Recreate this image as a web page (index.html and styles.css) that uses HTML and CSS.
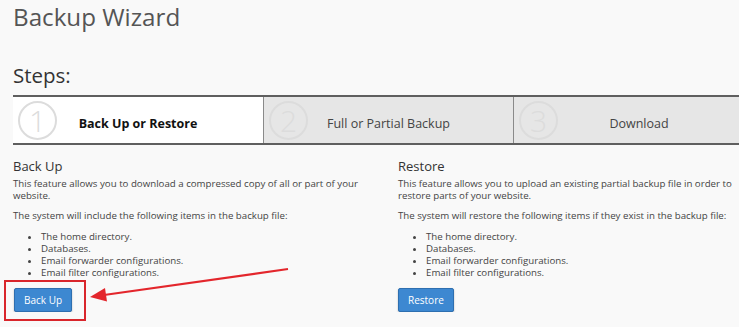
FILE: index.html
```html
<!DOCTYPE html>
<html lang="en">
<head>
    <meta charset="UTF-8">
    <meta name="viewport" content="width=device-width, initial-scale=1.0">
    <title>Backup Wizard</title>
    <link rel="stylesheet" href="styles.css">
</head>
<body>
    <div class="page">
        <h1 class="title">Backup Wizard</h1>
        <h2 class="steps-title">Steps:</h2>
        <div class="steps">
            <div class="step active">
                <span class="step-num">1</span>
                <span class="step-label">Back Up or Restore</span>
            </div>
            <div class="step">
                <span class="step-num">2</span>
                <span class="step-label">Full or Partial Backup</span>
            </div>
            <div class="step">
                <span class="step-num">3</span>
                <span class="step-label">Download</span>
            </div>
        </div>

        <div class="columns">
            <div class="col">
                <h3>Back Up</h3>
                <p>This feature allows you to download a compressed copy of all or part of your website.</p>
                <p>The system will include the following items in the backup file:</p>
                <ul>
                    <li>The home directory.</li>
                    <li>Databases.</li>
                    <li>Email forwarder configurations.</li>
                    <li>Email filter configurations.</li>
                </ul>
                <button class="btn">Back Up</button>
            </div>
            <div class="col">
                <h3>Restore</h3>
                <p>This feature allows you to upload an existing partial backup file in order to restore parts of your website.</p>
                <p>The system will restore the following items if they exist in the backup file:</p>
                <ul>
                    <li>The home directory.</li>
                    <li>Databases.</li>
                    <li>Email forwarder configurations.</li>
                    <li>Email filter configurations.</li>
                </ul>
                <button class="btn">Restore</button>
            </div>
        </div>
    </div>

    <!-- annotation drawn over the screenshot -->
    <svg class="annotation" width="739" height="327" viewBox="0 0 739 327">
        <rect x="5" y="281" width="80" height="39" fill="none" stroke="#d9262c" stroke-width="2"/>
        <line x1="288" y1="269" x2="104" y2="295" stroke="#e3262c" stroke-width="2.2"/>
        <polygon points="90,297 107,301.5 105,288" fill="#e3262c"/>
    </svg>
</body>
</html>
```

FILE: styles.css
```css
body {
    margin: 0;
    background-color: #f9f9f9;
    font-family: "Open Sans", "DejaVu Sans", sans-serif;
    color: #333;
    overflow: hidden;
}
.page {
    position: relative;
    width: 751px;
    padding-left: 13px;
}
.title {
    margin: 1px 0 0;
    font-size: 24.2px;
    line-height: 32px;
    font-weight: 400;
    color: #555;
}
.steps-title {
    margin: 28px 0 6px;
    font-size: 20.5px;
    line-height: 28px;
    font-weight: 400;
    color: #333;
}
.steps {
    display: grid;
    grid-template-columns: 250px 250px 251px;
    border-top: 2px solid #5f5f5f;
    border-bottom: 2px solid #5f5f5f;
}
.step {
    display: grid;
    grid-template-columns: 1fr auto 1fr;
    align-items: center;
    height: 46px;
    background-color: #e6e6e6;
    border-left: 1px solid #8a8a8a;
    font-size: 12.5px;
    color: #444;
}
.step.active {
    background-color: #fff;
    border-left: none;
    color: #111;
    font-weight: 700;
}
.step-num {
    grid-column: 1;
    grid-row: 1;
    justify-self: start;
    width: 35px;
    height: 35px;
    margin-left: 5px;
    border: 2px solid #dcdcdc;
    border-radius: 50%;
    font-size: 30px;
    font-weight: 300;
    line-height: 35px;
    text-align: center;
    color: #dcdcdc;
}
.step-label {
    grid-column: 2;
    grid-row: 1;
    padding-top: 6px;
}
.columns {
    display: grid;
    grid-template-columns: 385px 353px;
    margin-top: 12px;
}
.col h3 {
    margin: 0 0 3px;
    font-size: 13px;
    line-height: 18px;
    font-weight: 400;
    color: #333;
}
.col p {
    margin: 0 0 8px;
    font-size: 9.7px;
    line-height: 12px;
    color: #444;
}
.col:first-child p {
    padding-right: 20px;
}
.col ul {
    margin: 9px 0 9px;
    padding-left: 28px;
    font-size: 9.7px;
    line-height: 12px;
    color: #444;
}
.btn {
    display: block;
    height: 24px;
    margin-left: 1px;
    padding: 0 9px;
    background-color: #3d88d1;
    border: 1px solid #2e6fb0;
    border-radius: 2px;
    box-shadow: 0 1px 2px rgba(0,0,0,0.25);
    color: #fff;
    font-family: "Open Sans", sans-serif;
    font-size: 10px;
    font-weight: 400;
}
.col:last-child .btn {
    margin-left: 0;
}
.annotation {
    position: absolute;
    left: 0;
    top: 0;
    pointer-events: none;
}
```
